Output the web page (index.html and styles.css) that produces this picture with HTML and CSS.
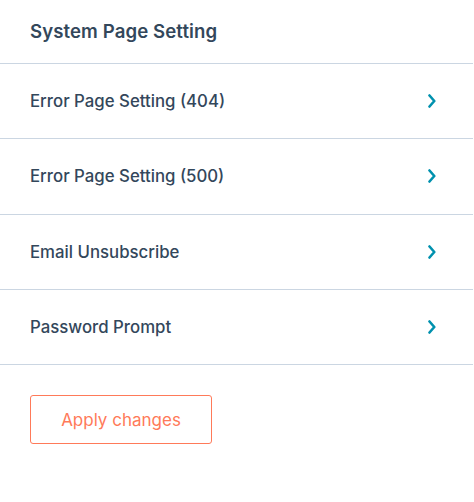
FILE: index.html
```html
<!DOCTYPE html>
<html lang="en">
<head>
    <meta charset="UTF-8">
    <meta name="viewport" content="width=device-width, initial-scale=1.0">
    <title>System Page Setting</title>
    <link rel="stylesheet" href="styles.css">
</head>
<body>

<div class="panel">
    <h2 class="panel-title">System Page Setting</h2>

    <ul class="setting-list">
        <li class="setting-item">
            <span>Error Page Setting (404)</span>
            <svg class="chevron" viewBox="0 0 8 14" width="8" height="14"><path d="M1.5 1.5 L6.3 7 L1.5 12.5"/></svg>
        </li>
        <li class="setting-item">
            <span>Error Page Setting (500)</span>
            <svg class="chevron" viewBox="0 0 8 14" width="8" height="14"><path d="M1.5 1.5 L6.3 7 L1.5 12.5"/></svg>
        </li>
        <li class="setting-item">
            <span>Email Unsubscribe</span>
            <svg class="chevron" viewBox="0 0 8 14" width="8" height="14"><path d="M1.5 1.5 L6.3 7 L1.5 12.5"/></svg>
        </li>
        <li class="setting-item">
            <span>Password Prompt</span>
            <svg class="chevron" viewBox="0 0 8 14" width="8" height="14"><path d="M1.5 1.5 L6.3 7 L1.5 12.5"/></svg>
        </li>
    </ul>

    <div class="actions">
        <button class="btn-apply">Apply changes</button>
    </div>
</div>

</body>
</html>
```

FILE: styles.css
```css
/* Global styles */
* {
    margin: 0;
    padding: 0;
    box-sizing: border-box;
}

body {
    background: #fff;
    font-family: 'Inter', 'Noto Sans', sans-serif;
    color: #33475b;
}

.panel {
    width: 473px;
}

.panel-title {
    height: 64px;
    display: flex;
    align-items: center;
    padding: 0 30px 1px;
    font-size: 18.6px;
    font-weight: 600;
    letter-spacing: 0.1px;
    border-bottom: 1px solid #cbd6e2;
}

.setting-list {
    list-style: none;
}

.setting-item {
    height: 75.3px;
    display: flex;
    align-items: center;
    justify-content: space-between;
    padding: 0 37px 0 30px;
    font-size: 16.8px;
    font-weight: 500;
    border-bottom: 1px solid #cbd6e2;
    cursor: pointer;
}

.chevron {
    fill: none;
    stroke: #0091ae;
    stroke-width: 2.6;
    stroke-linecap: round;
    stroke-linejoin: round;
}

.actions {
    padding: 30px 30px;
}

.btn-apply {
    width: 182px;
    height: 49px;
    background: #fff;
    border: 1px solid #ff7a59;
    border-radius: 3px;
    color: #ff7a59;
    font-family: 'Inter', sans-serif;
    font-size: 17px;
    cursor: pointer;
}
```
